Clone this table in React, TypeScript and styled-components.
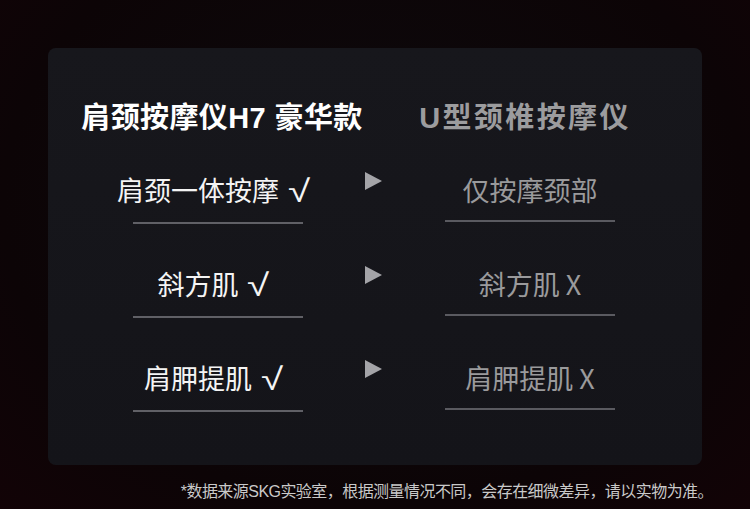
import styled, { createGlobalStyle } from "styled-components";

const GlobalStyle = createGlobalStyle`
	html, body {
		margin: 0;
		padding: 0;
		background: #0c0406;
	}
	body {
		font-family: "Liberation Sans", "Noto Sans CJK SC", sans-serif;
	}
`;

interface Row {
	ours: string;
	theirs: string;
}

const rows: Row[] = [
	{ ours: "肩颈一体按摩", theirs: "仅按摩颈部" },
	{ ours: "斜方肌", theirs: "斜方肌 X" },
	{ ours: "肩胛提肌", theirs: "肩胛提肌 X" },
];

const Cell = ({ text, muted, check }: { text: string; muted?: boolean; check?: boolean }) => {
	return (
		<CellBox>
			<CellText muted={muted}>
				{text}
				{check && <Check>√</Check>}
			</CellText>
			<Underline muted={muted} />
		</CellBox>
	);
};

const App = () => {
	return (
		<Page>
			<GlobalStyle />
			<Card>
				<Grid>
					<Heading shift={4}>肩颈按摩仪H7 豪华款</Heading>
					<span />
					<Heading shift={-5} muted>
						U型颈椎按摩仪
					</Heading>
					{rows.map((row) => (
						<>
							<Cell key={row.ours} text={row.ours} check />
							<Arrow />
							<Cell key={row.theirs} text={row.theirs} muted />
						</>
					))}
				</Grid>
			</Card>
			<Footnote>*数据来源SKG实验室，根据测量情况不同，会存在细微差异，请以实物为准。</Footnote>
		</Page>
	);
};

const Page = styled.div`
	width: 750px;
	height: 509px;
	box-sizing: border-box;
	padding: 48px 48px 0;
	display: flex;
	flex-direction: column;
	background: radial-gradient(ellipse at 50% 40%, #0d0a0d 0%, #0c0406 70%, #120306 100%);
	overflow: hidden;
`;

const Card = styled.div`
	height: 417px;
	box-sizing: border-box;
	padding: 50px 28px 0 26px;
	border-radius: 8px;
	background: linear-gradient(180deg, #17171c 0%, #141419 100%);
`;

const Grid = styled.div`
	display: grid;
	grid-template-columns: 288px 24px 288px;
	row-gap: 43px;
	align-items: start;
	justify-items: center;
`;

const Heading = styled.div<{ muted?: boolean; shift: number }>`
	height: 40px;
	line-height: 40px;
	font-size: 29px;
	font-weight: 700;
	letter-spacing: ${(p) => (p.muted ? "2.4px" : "0.4px")};
	white-space: nowrap;
	margin-bottom: -8px;
	margin-left: ${(p) => p.shift * 2}px;
	color: ${(p) => (p.muted ? "#9c9c9e" : "#ffffff")};
`;

const CellBox = styled.div`
	display: flex;
	flex-direction: column;
	align-items: center;
	gap: 15px;
`;

const CellText = styled.div<{ muted?: boolean }>`
	display: flex;
	align-items: center;
	height: 34px;
	line-height: 34px;
	font-family: "Noto Sans CJK SC", sans-serif;
	font-size: 27px;
	white-space: nowrap;
	color: ${(p) => (p.muted ? "#9a9a9c" : "#f4f4f4")};
`;

const Check = styled.span`
	display: inline-block;
	margin-left: 9px;
	margin-right: 14px;
	line-height: 34px;
	font-family: "DejaVu Sans", sans-serif;
	font-size: 31px;
	font-weight: 200;
	transform: translateY(1px) scaleX(1.3);
	transform-origin: left center;
`;

const Underline = styled.div<{ muted?: boolean }>`
	width: 170px;
	height: 2px;
	margin-top: ${(p) => (p.muted ? "-2px" : "0")};
	background: ${(p) => (p.muted ? "#5a5a60" : "#606066")};
`;

const Arrow = styled.div`
	margin-top: -1px;
	width: 0;
	height: 0;
	border-top: 9px solid transparent;
	border-bottom: 9px solid transparent;
	border-left: 17px solid #a4a4a8;
	margin-left: -2px;
`;

const Footnote = styled.div`
	margin-top: 17px;
	text-align: right;
	margin-right: -11px;
	font-size: 16px;
	line-height: 20px;
	color: #c9c9c9;
	letter-spacing: -0.55px;
	white-space: nowrap;
`;

export default App;
